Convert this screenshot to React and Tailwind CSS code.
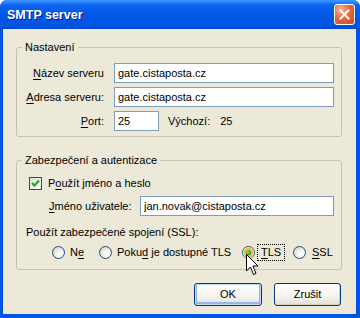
import React from "react";

const Radio = ({ checked }) => (
  <span className="relative flex h-[13px] w-[13px] shrink-0 items-center justify-center rounded-full border border-[#1C5180] bg-[radial-gradient(circle_at_65%_65%,#FFFFFF_10%,#E8E6DE_55%,#C9C5B6_100%)]">
    {checked && (
      <span className="flex h-[11px] w-[11px] items-center justify-center rounded-full bg-[#F5B33B] shadow-[inset_0_0_0_1px_#FAD592]">
        <span className="h-[5px] w-[5px] rounded-full bg-[radial-gradient(circle_at_35%_35%,#7BE07B,#21A121_70%)]" />
      </span>
    )}
  </span>
);

const U = ({ children }) => <span className="underline underline-offset-[2px]">{children}</span>;

export default function App() {
  return (
    <div className="relative flex h-[318px] w-[360px] flex-col overflow-hidden rounded-t-[7px] bg-[#0054E3] font-['Liberation_Sans',Arial,sans-serif] text-[11px] leading-[13px] text-black">
      {/* title bar */}
      <div className="flex h-[29px] shrink-0 items-center justify-between bg-[linear-gradient(180deg,#3D95FF_0%,#2A84FC_8%,#0A62EE_18%,#0058E6_50%,#0055E3_85%,#0049D8_100%)] pl-[7px] pr-[5px]">
        <span className="pt-[2px] text-[12.5px] font-bold leading-[15px] text-white [text-shadow:1px_1px_0_#0A1E8C]">
          SMTP server
        </span>
        <div className="flex h-[21px] w-[21px] items-center justify-center rounded-[3px] border border-white bg-[radial-gradient(circle_at_30%_25%,#F6B69C_0%,#E5683F_45%,#CF4A22_100%)]">
          <svg width="11" height="11" viewBox="0 0 11 11">
            <path d="M1.5 1.5 L9.5 9.5 M9.5 1.5 L1.5 9.5" stroke="white" strokeWidth="2" strokeLinecap="square" />
          </svg>
        </div>
      </div>

      {/* client area */}
      <div className="flex flex-1 flex-col pb-[4px] pl-[3px] pr-[4px]">
        <div className="flex flex-1 flex-col bg-[#ECE9D8]">
          <fieldset className="ml-[13px] mt-[12px] w-[326px] rounded-[3px] border border-[#C5C2B2] pb-[5px] pl-[9px] pr-[7px] pt-[9px]">
            <legend className="-ml-[4px] px-[3px]">Nastavení</legend>
            <div className="flex flex-col gap-[4px]">
              <div className="flex items-center">
                <span className="w-[78px] text-right">
                  <U>N</U>ázev serveru
                </span>
                <input
                  readOnly
                  defaultValue="gate.cistaposta.cz"
                  className="ml-[10px] h-[20px] flex-1 border border-[#7F9DB9] bg-white pl-[3px] text-[11px] outline-none"
                />
              </div>
              <div className="flex items-center">
                <span className="w-[78px] text-right">
                  <U>A</U>dresa serveru:
                </span>
                <input
                  readOnly
                  defaultValue="gate.cistaposta.cz"
                  className="ml-[10px] h-[20px] flex-1 border border-[#7F9DB9] bg-white pl-[3px] text-[11px] outline-none"
                />
              </div>
              <div className="flex items-center">
                <span className="w-[78px] text-right">
                  <U>P</U>ort:
                </span>
                <input
                  readOnly
                  defaultValue="25"
                  className="ml-[10px] h-[20px] w-[45px] border border-[#7F9DB9] bg-white pl-[3px] text-[11px] outline-none"
                />
                <span className="ml-[9px]">Výchozí:</span>
                <span className="ml-[10px]">25</span>
              </div>
            </div>
          </fieldset>

          <fieldset className="ml-[13px] mt-[17px] w-[326px] rounded-[3px] border border-[#C5C2B2] pb-[8px] pl-[9px] pr-[7px] pt-[10px]">
            <legend className="-ml-[4px] px-[3px]">Zabezpečení a autentizace</legend>
            <div className="flex items-center">
              <span className="ml-[3px] flex h-[13px] w-[13px] items-center justify-center border border-[#1C5180] bg-[linear-gradient(135deg,#DCDCD7,#FFFFFF)]">
                <svg width="9" height="9" viewBox="0 0 9 9">
                  <path d="M1 4 L3.5 6.5 L8 1.5" stroke="#21A121" strokeWidth="2" fill="none" />
                </svg>
              </span>
              <span className="ml-[6px]">
                P<U>o</U>užít jméno a heslo
              </span>
            </div>
            <div className="mt-[6px] flex items-center">
              <span className="ml-[23px] w-[91px]">
                <U>J</U>méno uživatele:
              </span>
              <input
                readOnly
                defaultValue="jan.novak@cistaposta.cz"
                className="h-[20px] flex-1 border border-[#7F9DB9] bg-white pl-[3px] text-[11px] outline-none"
              />
            </div>
            <div className="mt-[10px]">Použít zabezpečené spojení (SSL):</div>
            <div className="mt-[5px] flex items-center pl-[26px]">
              <div className="flex w-[47px] items-center">
                <Radio />
                <span className="ml-[5px]">
                  N<U>e</U>
                </span>
              </div>
              <div className="flex w-[143px] items-center">
                <Radio />
                <span className="ml-[5px]">
                  Poku<U>d</U> je dostupné TLS
                </span>
              </div>
              <div className="flex w-[51px] items-center">
                <Radio checked />
                <span className="ml-[2px] border border-dotted border-black px-[3px] py-[1px]">
                  <U>T</U>LS
                </span>
              </div>
              <div className="flex items-center">
                <Radio />
                <span className="ml-[6px]">
                  <U>S</U>SL
                </span>
              </div>
            </div>
          </fieldset>

          <div className="mr-[15px] mt-[13px] flex justify-end gap-[12px]">
            <button className="h-[23px] w-[68px] rounded-[3px] border border-[#003C74] bg-[linear-gradient(180deg,#FFFFFF_0%,#F4F3EE_60%,#E3E0D6_100%)] text-[11px] shadow-[inset_0_0_0_1px_#C2D5F5,inset_0_-1px_0_2px_#98B4E8]">
              OK
            </button>
            <button className="h-[23px] w-[67px] rounded-[3px] border border-[#003C74] bg-[linear-gradient(180deg,#FFFFFF_0%,#F4F3EE_60%,#E3E0D6_100%)] text-[11px] shadow-[inset_-1px_-1px_0_#D6D0C5]">
              Zrušit
            </button>
          </div>
        </div>
      </div>

      {/* mouse pointer */}
      <svg className="absolute left-[246px] top-[254px]" width="13" height="22" viewBox="0 0 13 22">
        <path d="M0.5 0.5 L0.5 17 L4.5 13 L7.5 20.5 L10 19.5 L7 12 L12 12 Z" fill="white" stroke="black" strokeWidth="1" strokeLinejoin="miter" />
      </svg>
    </div>
  );
}
